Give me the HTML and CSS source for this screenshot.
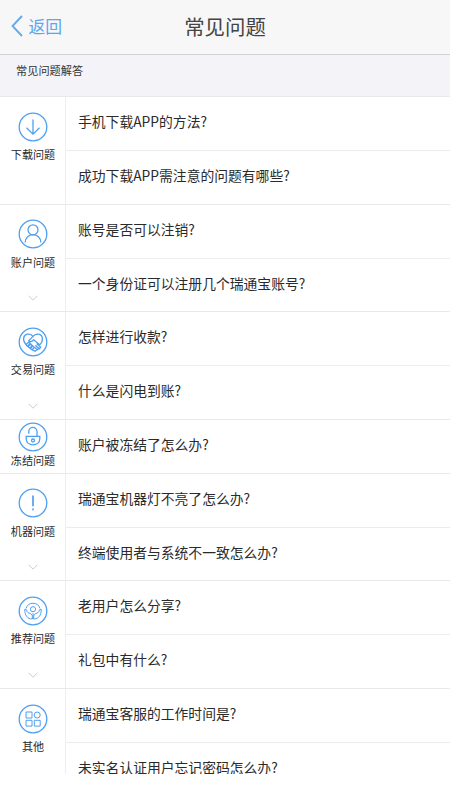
FILE: index.html
```html
<!DOCTYPE html>
<html lang="zh-CN">
<head>
<meta charset="utf-8">
<meta name="viewport" content="width=device-width, initial-scale=1">
<title>常见问题</title>
<link rel="stylesheet" href="styles.css">
</head>
<body>
<header class="bar">
  <a class="back"><svg class="back-icon" viewBox="0 0 12 22"><path d="M11 1 1.5 11 11 21"/></svg><span>返回</span></a>
  <h1>常见问题</h1>
</header>
<div class="subtitle">常见问题解答</div>
<main class="list">
  <section class="group">
    <div class="side">
      <svg class="icon" viewBox="0 0 30 30"><circle cx="15" cy="15" r="13.8"/><path d="M15 7.5V22M8.5 15.8 15 22.2l6.5-6.4"/></svg>
      <span class="label">下载问题</span>
    </div>
    <ul><li>手机下载APP的方法?</li><li>成功下载APP需注意的问题有哪些?</li></ul>
  </section>
  <section class="group">
    <div class="side">
      <svg class="icon" viewBox="0 0 30 30"><circle cx="15" cy="15" r="13.8"/><circle cx="15" cy="10.8" r="5"/><path d="M7.2 23.5c0-10.4 15.6-10.4 15.6 0"/></svg>
      <span class="label">账户问题</span>
      <svg class="more" viewBox="0 0 10 6"><path d="M.5.7 5 5.2 9.5.7"/></svg>
    </div>
    <ul><li>账号是否可以注销?</li><li>一个身份证可以注册几个瑞通宝账号?</li></ul>
  </section>
  <section class="group">
    <div class="side">
      <svg class="icon" viewBox="0 0 30 30"><circle cx="15" cy="15" r="13.8"/><path d="M8 17.5C4.2 13.5 5 8 9.5 7.2 12 6.8 14 8 15 9.4c1-1.4 3-2.6 5.5-2.2 4.8.8 5.2 6.7 1.2 10.5"/><path d="m15 9.4-4.2 4.2c.8 1.7 2.8 1.5 5-.8l6 5.2M8 17.5l2.5-2.2 1.5 1.3-2.7 2.6zM10 19.6l2.7-2.6 1.5 1.5-2.5 2.6zM12.3 21.5l2.5-2.6 1.5 1.5-2.2 2.4zM14.6 23l2.5 1.2 1.4-1.3m-2.3-3 3.2 3 1.2-1.4-3.2-3.2m2 2 2.2 1.5 1-1.6-4-3.6"/></svg>
      <span class="label">交易问题</span>
      <svg class="more" viewBox="0 0 10 6"><path d="M.5.7 5 5.2 9.5.7"/></svg>
    </div>
    <ul><li>怎样进行收款?</li><li>什么是闪电到账?</li></ul>
  </section>
  <section class="group">
    <div class="side compact">
      <svg class="icon" viewBox="0 0 30 30"><circle cx="15" cy="15" r="13.8"/><path d="M10.8 11.7V9.5a4.1 4.1 0 0 1 8.2 0v4.8M8.2 14.3h13.6v2.5c0 8-13.6 8-13.6 0z"/><circle cx="15" cy="18.5" r="1.5"/></svg>
      <span class="label">冻结问题</span>
    </div>
    <ul><li>账户被冻结了怎么办?</li></ul>
  </section>
  <section class="group">
    <div class="side">
      <svg class="icon" viewBox="0 0 30 30"><circle cx="15" cy="15" r="13.8"/><path class="bold" d="M15 7.5v10.8M15 20.5v1.8"/></svg>
      <span class="label">机器问题</span>
      <svg class="more" viewBox="0 0 10 6"><path d="M.5.7 5 5.2 9.5.7"/></svg>
    </div>
    <ul><li>瑞通宝机器灯不亮了怎么办?</li><li>终端使用者与系统不一致怎么办?</li></ul>
  </section>
  <section class="group">
    <div class="side">
      <svg class="icon" viewBox="0 0 30 30"><circle cx="15" cy="15" r="13.8"/><circle class="fine" cx="15" cy="13.2" r="2.6"/><path class="fine" d="M8 12.5a7.3 7.3 0 0 1 14 0M6.7 13.5c.1 5.5 2.4 9.5 7.6 9.5v-2.5c0-2-1.4-3-3.5-3.5-1.3-.3-2-1.8-2.3-3.2zM23.3 13.5c-.1 5.5-2.4 9.5-7.6 9.5v-2.5c0-2 1.4-3 3.5-3.5 1.3-.3 2-1.8 2.3-3.2zM15 17.2V23"/></svg>
      <span class="label">推荐问题</span>
      <svg class="more" viewBox="0 0 10 6"><path d="M.5.7 5 5.2 9.5.7"/></svg>
    </div>
    <ul><li>老用户怎么分享?</li><li>礼包中有什么?</li></ul>
  </section>
  <section class="group">
    <div class="side">
      <svg class="icon" viewBox="0 0 30 30"><circle cx="15" cy="15" r="13.8"/><path class="fine" d="M8 8h6v6H8zM8 16.3h6v5.8H8zM16.3 16.3h5.9v5.8h-5.9z"/><circle class="fine" cx="19.2" cy="11" r="3"/></svg>
      <span class="label">其他</span>
    </div>
    <ul><li>瑞通宝客服的工作时间是?</li><li>未实名认证用户忘记密码怎么办?</li></ul>
  </section>
</main>
</body>
</html>
```
FILE: styles.css
```css
* { box-sizing: border-box; }
body {
  margin: 0;
  background: #fff;
  color: #2a2a2a;
  font-family: "Noto Sans CJK SC", sans-serif;
  overflow: hidden;
}
svg { display: block; fill: none; stroke: #4f9ff0; }
.bar {
  display: grid;
  grid-template-columns: 100px 1fr 100px;
  align-items: center;
  height: 55px;
  padding-bottom: 2px;
  background: #f7f7f7;
  border-bottom: 1px solid #d3d3d6;
}
.back {
  display: flex;
  align-items: center;
  gap: 6px;
  padding-left: 10.5px;
  color: #5aa6f0;
  font-size: 16.8px;
  line-height: 24px;
}
.back-icon { width: 12px; height: 22px; stroke: #65aaea; stroke-width: 1.9; }
h1 {
  margin: 0;
  text-align: center;
  color: #444;
  font-size: 20.4px;
  font-weight: 400;
  line-height: 30px;
}
.subtitle {
  height: 41.3px;
  padding: 7px 16px;
  background: #f3f3f8;
  color: #333;
  font-size: 11.2px;
  line-height: 17px;
}
.list { height: 678.2px; overflow: hidden; }
.group { display: flex; border-top: 1px solid #e9e9ea; }
.side {
  display: flex;
  flex-direction: column;
  align-items: center;
  width: 66px;
  padding-top: 14.5px;
  border-right: 1px solid #efefef;
}
.side.compact { padding-top: 2px; }
.icon { width: 30px; height: 30px; margin-left: 1px; stroke-width: 1.3; }
.icon .fine { stroke-width: 1; }
.icon .bold { stroke-width: 1.7; }
.label { margin: 4.5px 0 0 1px; font-size: 11.1px; line-height: 17px; }
.compact .label { margin-top: 0; }
.more { width: 10px; height: 6px; margin-top: 24.5px; stroke: #ccc; }
ul { flex: 1; margin: 0; padding: 0; list-style: none; }
li {
  height: 52.8px;
  padding-left: 12px;
  font-size: 13.8px;
  line-height: 49px;
}
li + li { height: 53.8px; border-top: 1px solid #ececec; }
```
